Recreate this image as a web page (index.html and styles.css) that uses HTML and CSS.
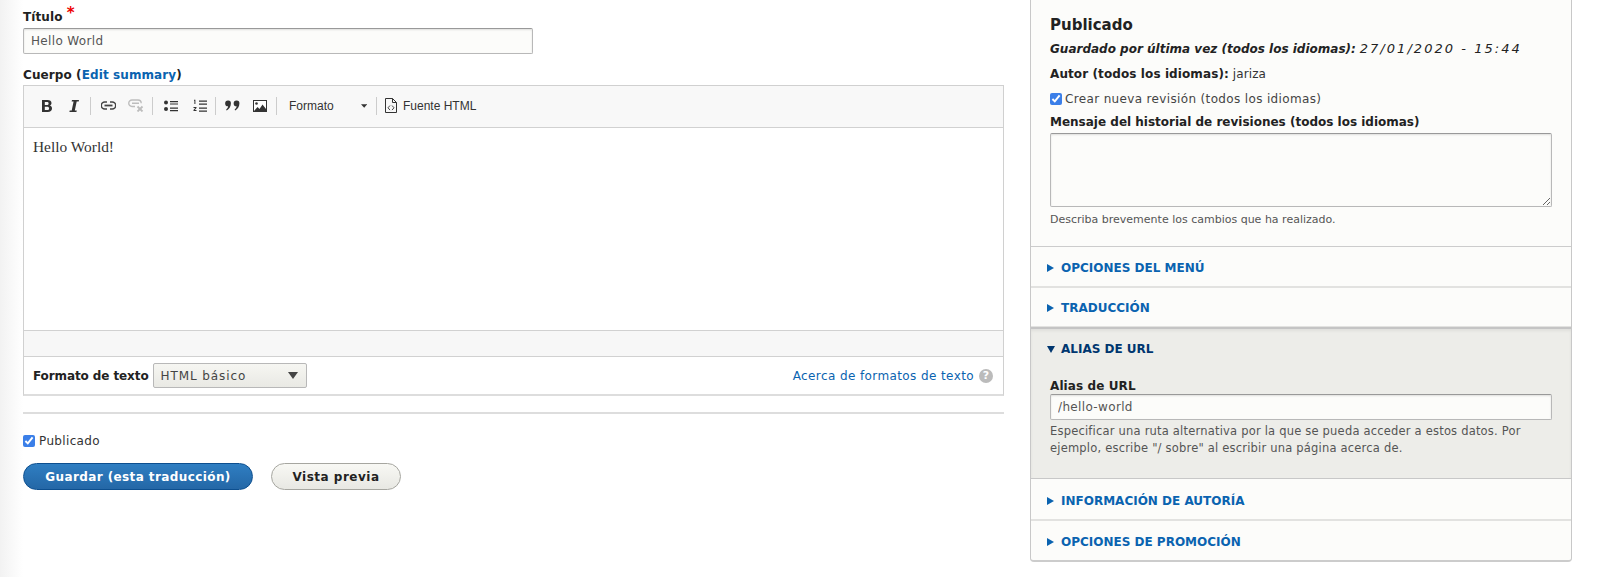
FILE: index.html
```html
<!DOCTYPE html>
<html lang="es">
<head>
<meta charset="utf-8">
<title>Editar</title>
<link rel="stylesheet" href="styles.css">
</head>
<body>
<div class="page">
  <main class="main">
    <label class="label title-label">Título <span class="req">*</span></label>
    <input class="text title-input" type="text" value="Hello World">
    <div class="label body-label">Cuerpo (<a class="link" href="#">Edit summary</a>)</div>
    <div class="editor">
      <div class="toolbar">
        <span class="btn b-bold"><svg width="12" height="14" viewBox="0 0 12 14"><path fill="#333" fill-rule="evenodd" d="M1 1h5.500c2.500 0 4 1.100 4 3 0 1.300-.8 2.200-1.900 2.600 1.500.3 2.400 1.400 2.400 2.900C11 11.700 9.300 13 6.800 13H1zM3.800 3v2.900h2c1.100 0 1.800-.5 1.800-1.500S6.900 3 5.800 3zm0 4.800V11h2.400c1.200 0 1.900-.6 1.900-1.600s-.7-1.600-2-1.600z"/></svg></span>
        <span class="btn b-ital"><svg width="10" height="14" viewBox="0 0 10 14"><path fill="#333" d="M3 1h7l-.3 1.600H7.700L5.800 11.400h2L7.400 13H.4l.3-1.600h2L4.600 2.600h-2z"/></svg></span>
        <i class="sep s1"></i>
        <span class="btn b-link"><svg width="15" height="9" viewBox="0 0 15 9" fill="none" stroke="#444" stroke-width="1.500"><path d="M6 1H3.800a3.500 3.500 0 0 0 0 7H6M9 1h2.200a3.500 3.500 0 0 1 0 7H9"/><path d="M3.500 4.500h8" stroke-width="1.800"/></svg></span>
        <span class="btn b-unlink"><svg width="16" height="13" viewBox="0 0 16 13" fill="none" stroke="#bdbdbd" stroke-width="1.400"><path d="M7 7.500H4a3.200 3.200 0 0 1 0-6.500h6a3.200 3.200 0 0 1 3.200 3.200M4 4.200h7"/><path stroke-width="1.800" d="M9.500 7.500l5 5M14.500 7.500l-5 5"/></svg></span>
        <i class="sep s2"></i>
        <span class="btn b-ul"><svg width="14" height="12" viewBox="0 0 14 12" fill="#333"><circle cx="2" cy="2.500" r="2"/><circle cx="2" cy="9" r="2"/><path d="M6 1h8v1.200H6zM6 3.400h8v1.200H6zM6 7.500h8v1.200H6zM6 10h8v1.200H6z"/></svg></span>
        <span class="btn b-ol"><svg width="14" height="14" viewBox="0 0 14 14" fill="#333"><path d="M1 .8h1.400V5H1.400V1.800H1zM.5 8h3v1L1.800 11h1.700v1h-3v-1l1.700-2H.5zM6 1.500h8v1.200H6zM6 4.500h8v1.200H6zM6 8.500h8v1.200H6zM6 11.500h8v1.200H6z"/></svg></span>
        <i class="sep s3"></i>
        <span class="btn b-quote"><svg width="15" height="11" viewBox="0 0 15 11" fill="#333"><path d="M3 .5a2.800 2.800 0 0 1 2.900 3c0 3.200-1.900 5.800-4.200 7l-.6-.8c1.200-1 1.900-2.200 2-3.400A2.900 2.900 0 0 1 3 .5zM11.500.5a2.800 2.800 0 0 1 2.900 3c0 3.200-1.900 5.800-4.200 7l-.6-.8c1.200-1 1.900-2.200 2-3.400a2.900 2.900 0 0 1-.1-5.800z"/></svg></span>
        <span class="btn b-img"><svg width="14" height="12" viewBox="0 0 14 12"><rect x=".5" y=".5" width="13" height="11" fill="#fff" stroke="#333"/><circle cx="3.500" cy="3.500" r="1.300" fill="#333"/><path fill="#333" d="M1 11l3.500-4 2 2 3-4.500L13 9v2z"/></svg></span>
        <i class="sep s4"></i>
        <span class="combo">Formato<svg class="combo-arrow" width="7" height="4" viewBox="0 0 7 4"><path fill="#333" d="M0 0h7L3.500 4z"/></svg></span>
        <i class="sep s5"></i>
        <span class="source"><svg width="12" height="15" viewBox="0 0 12 15" fill="none" stroke="#333"><path d="M.5.500h7l4 4v10H.5zM7.500.500v4h4"/><path d="M5 7.500L3 9.800l2 2.300M7 7.500l2 2.300-2 2.300" stroke-width=".9"/></svg>Fuente HTML</span>
      </div>
      <div class="content">Hello World!</div>
      <div class="pathbar"></div>
      <div class="format">
        <span class="format-label">Formato de texto</span>
        <span class="select">HTML básico<svg width="10" height="7" viewBox="0 0 10 7"><path fill="#444" d="M0 0h10L5 7z"/></svg></span>
        <a class="link format-help" href="#">Acerca de formatos de texto</a>
        <span class="help-icon">?</span>
      </div>
    </div>
    <hr class="rule">
    <label class="check-row pub"><input class="check" type="checkbox" checked> Publicado</label>
    <div class="actions">
      <a class="button primary" href="#">Guardar (esta traducción)</a>
      <a class="button" href="#">Vista previa</a>
    </div>
  </main>
  <aside class="side">
    <section class="meta">
      <h3 class="meta-title">Publicado</h3>
      <div class="saved"><em class="strong-em">Guardado por última vez (todos los idiomas):</em> <span class="date">27/01/2020 - 15:44</span></div>
      <div class="author"><b class="semi">Autor (todos los idiomas):</b> jariza</div>
      <label class="check-row rev"><input class="check" type="checkbox" checked> Crear nueva revisión (todos los idiomas)</label>
      <div class="label msg-label">Mensaje del historial de revisiones (todos los idiomas)</div>
      <textarea class="area"></textarea>
      <div class="desc">Describa brevemente los cambios que ha realizado.</div>
    </section>
    <div class="acc"><span class="tri"></span><a class="acc-link" href="#">Opciones del menú</a></div>
    <div class="acc"><span class="tri"></span><a class="acc-link" href="#">Traducción</a></div>
    <section class="open">
      <div class="acc-head"><span class="tri-down"></span><a class="acc-link dark" href="#">Alias de URL</a></div>
      <div class="label alias-label">Alias de URL</div>
      <input class="text alias-input" type="text" value="/hello-world">
      <div class="desc alias-desc">Especificar una ruta alternativa por la que se pueda acceder a estos datos. Por ejemplo, escribe "/ sobre" al escribir una página acerca de.</div>
    </section>
    <div class="acc"><span class="tri"></span><a class="acc-link" href="#">Información de autoría</a></div>
    <div class="acc last"><span class="tri"></span><a class="acc-link" href="#">Opciones de promoción</a></div>
  </aside>
</div>
</body>
</html>
```
FILE: styles.css
```css
* { box-sizing: border-box; }
html, body { margin: 0; height: 577px; overflow: hidden; }
body {
  background: linear-gradient(to right, #f2f2f2 0, #fafafa 14px, #fff 23px);
  font-family: "DejaVu Sans", sans-serif;
  font-size: 12px;
  color: #333;
}
.page { display: grid; grid-template-columns: 981px 542px; column-gap: 26px; padding-left: 23px; align-items: start; }
.main { padding-top: 9px; }
.label { display: block; font-weight: bold; color: #222; line-height: 16px; letter-spacing: .1px; }
.req { color: #e00; font-size: 15px; line-height: 10px; position: relative; top: -3px; }
.link { color: #0a63b0; text-decoration: none; letter-spacing: .1px; }
.text {
  display: block; height: 26px; padding: 0 7px; border: 1px solid #b8b8b8; border-top-color: #999; border-radius: 2px;
  background: #fcfcfa; font: inherit; color: #555; letter-spacing: .35px; box-shadow: inset 0 1px 2px rgba(0,0,0,.12);
}
.title-input { width: 510px; margin-top: 3px; }
.body-label { margin-top: 13px; line-height: 17px; }
.editor { margin-top: 1px; border: 1px solid #d0d0d0; border-bottom: 2px solid #ddd; }
.toolbar { display: flex; align-items: center; height: 42px; background: #f8f8f8; border-bottom: 1px solid #d1d1d1; padding: 0 0 2px 12px; }
.btn { display: flex; align-items: center; justify-content: center; flex: none; }
.b-bold { width: 22px; }
.b-ital { width: 32px; }
.sep { flex: none; width: 1px; height: 18px; background: #ccc; }
.s1 { margin-left: 0; }
.b-link { width: 16px; margin-left: 9px; }
.b-unlink { width: 16px; margin-left: 12px; }
.s2 { margin-left: 8px; }
.b-ul { width: 14px; margin-left: 11px; }
.b-ol { width: 14px; margin-left: 15px; }
.s3 { margin-left: 8px; }
.b-quote { width: 15px; margin-left: 9px; }
.b-img { width: 14px; margin-left: 13px; }
.s4 { margin-left: 9px; }
.combo { flex: none; display: flex; align-items: center; width: 90px; padding-left: 12px; font: 12px "Liberation Sans", sans-serif; color: #333; }
.combo-arrow { margin-left: 27px; }
.s5 { margin-left: 9px; }
.source { flex: none; display: flex; align-items: center; gap: 6px; margin-left: 8px; font: 12px "Liberation Sans", sans-serif; color: #333; }
.content { height: 202px; padding: 11px 9px; background: #fff; font: 15.400px/16px "Liberation Serif", serif; color: #333; }
.pathbar { height: 27px; background: #f7f7f7; border-top: 1px solid #d1d1d1; border-bottom: 1px solid #d1d1d1; }
.format { display: flex; align-items: center; height: 37px; padding: 0 10px 0 9px; background: #fff; }
.format-label { font-weight: bold; color: #222; letter-spacing: -.1px; }
.select {
  display: flex; align-items: center; justify-content: space-between; width: 154px; height: 25px; margin-left: 4px; padding: 0 8px 0 7px;
  border: 1px solid #b8b8b8; border-radius: 2px; background: linear-gradient(#f6f6f2, #e9e9e4); color: #444; letter-spacing: .9px;
}
.format-help { margin-left: auto; letter-spacing: .4px; }
.help-icon { display: flex; align-items: center; justify-content: center; width: 14px; height: 14px; margin-left: 5px; border-radius: 50%; background: #bbb; color: #fff; font-size: 11px; font-weight: bold; }
.rule { height: 2px; margin: 16px 0 0; border: 0; background: #ddd; }
.check-row { display: flex; align-items: center; gap: 3px; line-height: 16px; letter-spacing: .35px; }
.check { width: 12px; height: 12px; margin: 0; accent-color: #3b7fe8; }
.pub { margin-top: 19px; gap: 4px; color: #333; }
.actions { display: flex; gap: 18px; margin-top: 14px; }
.button {
  display: flex; align-items: center; justify-content: center; width: 130px; height: 27px; border: 1px solid #a6a6a0; border-radius: 14px;
  background: linear-gradient(#f8f8f4, #e8e8e3); font-weight: bold; color: #222; text-decoration: none; letter-spacing: .5px;
}
.primary { width: 230px; border-color: #0d4f8f; background: linear-gradient(#2f7ec2, #2467a6); color: #fff; letter-spacing: .4px; }
.side { height: 562px; background: #fcfcfa; border: 1px solid #c8c8c8; border-top: 0; border-radius: 0 0 4px 4px; border-bottom: 2px solid #ccc; }
.meta { height: 247px; padding: 16px 19px 0; border-bottom: 1px solid #ccc; }
.meta-title { margin: 0; font-size: 15px; line-height: 19px; font-weight: bold; color: #222; }
.saved { margin-top: 6px; line-height: 16px; color: #222; font-style: italic; }
.strong-em { font-weight: bold; }
.date { font-size: 13px; letter-spacing: 2.050px; }
.author { margin-top: 9px; line-height: 16px; color: #333; letter-spacing: .1px; }
.semi { font-weight: bold; color: #222; }
.rev { margin-top: 9px; color: #444; }
.msg-label { margin-top: 7px; letter-spacing: 0; }
.area { display: block; width: 502px; height: 74px; margin-top: 3px; border: 1px solid #b8b8b8; border-top-color: #999; border-radius: 2px; background: #fcfcfa; box-shadow: inset 0 1px 2px rgba(0,0,0,.12); }
.desc { color: #555; font-size: 11px; line-height: 16.500px; }
.meta .desc { margin-top: 5px; }
.acc { display: flex; align-items: center; gap: 7px; height: 40.500px; padding: 3px 0 0 16px; border-bottom: 2px solid #e2e2e0; }
.acc.last { padding-top: 2px; border-bottom: 0; }
.acc + .open { margin-top: -1px; }
.open + .acc { height: 42px; padding-top: 3px; }
.tri { width: 0; height: 0; border-left: 7px solid #0a63b0; border-top: 4px solid transparent; border-bottom: 4px solid transparent; }
.tri-down { width: 0; height: 0; margin-right: -1px; border-top: 7px solid #00366f; border-left: 4px solid transparent; border-right: 4px solid transparent; }
.acc-link { color: #0a63b0; font-size: 12px; font-weight: bold; text-transform: uppercase; text-decoration: none; }
.dark { color: #00366f; }
.open { height: 152px; padding: 0 19px; background: #edede9; border-top: 2px solid #c4c4c4; border-bottom: 1px solid #c8c8c8; box-shadow: inset 0 2px 3px rgba(0,0,0,.06); }
.acc-head { display: flex; align-items: center; gap: 7px; height: 40px; margin-left: -3px; }
.alias-label { margin-top: 10px; line-height: 15px; }
.alias-input { width: 502px; margin-top: 0; }
.alias-desc { margin-top: 3px; max-width: 490px; font-size: 11.500px; letter-spacing: .2px; }
```
